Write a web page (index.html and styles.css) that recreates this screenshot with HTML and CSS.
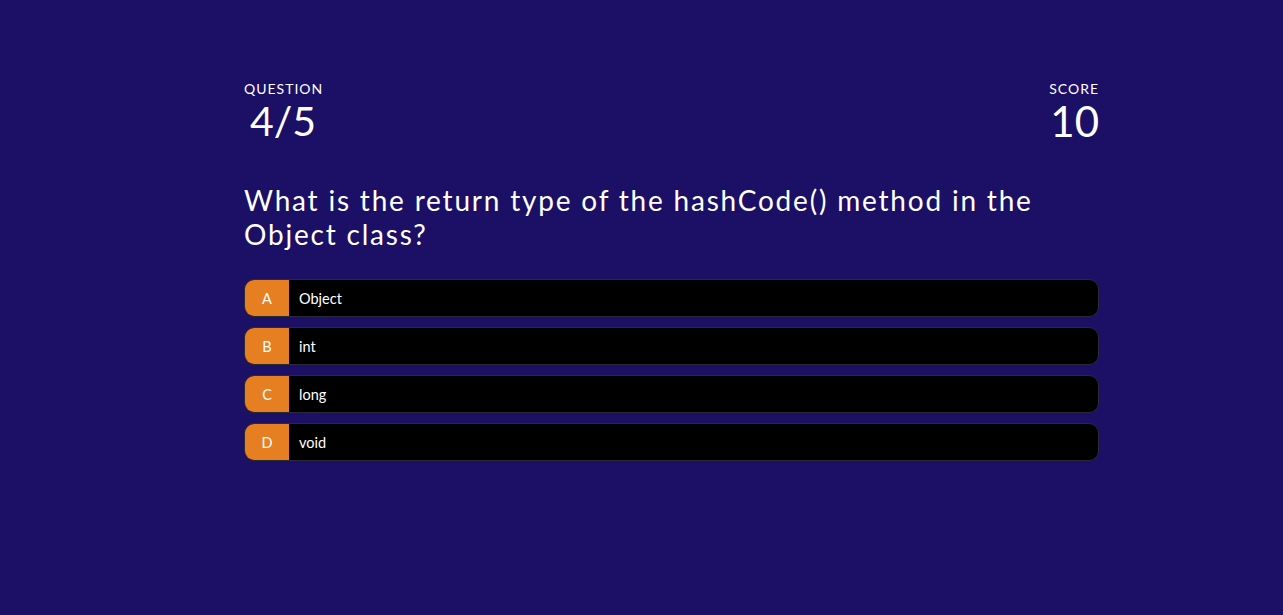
FILE: index.html
```html
<!DOCTYPE html>
<html>
<head>
<meta charset="utf-8">
<link rel="stylesheet" href="styles.css">
</head>
<body>
<div class="quiz">
  <div class="header">
    <div class="stat">
      <div class="label">QUESTION</div>
      <div class="value indent">4/5</div>
    </div>
    <div class="stat right">
      <div class="label">SCORE</div>
      <div class="value">10</div>
    </div>
  </div>
  <h1 class="question">What is the return type of the hashCode() method in the Object class?</h1>
  <div class="answers">
    <div class="answer"><span class="letter">A</span><span class="text">Object</span></div>
    <div class="answer"><span class="letter">B</span><span class="text">int</span></div>
    <div class="answer"><span class="letter">C</span><span class="text">long</span></div>
    <div class="answer"><span class="letter">D</span><span class="text">void</span></div>
  </div>
</div>
</body>
</html>
```
FILE: styles.css
```css
html, body {
  margin: 0;
  padding: 0;
}
body {
  background: #1c0f66;
  font-family: Lato, "Open Sans", sans-serif;
  color: #fff;
  height: 615px;
}
.quiz {
  width: 855px;
  margin: 0 auto;
  padding: 80px 0 0 60px;
}
.header {
  display: flex;
  justify-content: space-between;
}
.stat.right {
  text-align: right;
}
.label {
  font-size: 14px;
  letter-spacing: 1px;
  line-height: 17px;
}
.value {
  font-size: 42px;
  line-height: 48px;
}
.value.indent {
  padding-left: 6px;
  font-size: 41px;
}
.question {
  font-size: 28px;
  font-weight: 400;
  letter-spacing: 1.8px;
  line-height: 34px;
  margin: 38px 0 28px;
}
.answers {
  display: flex;
  flex-direction: column;
  gap: 10px;
}
.answer {
  display: flex;
  height: 36px;
  background: #000;
  border: 1px solid #2a2a3a;
  border-radius: 10px;
  overflow: hidden;
  font-size: 14.5px;
  align-items: stretch;
}
.letter {
  width: 44px;
  background: #e67e22;
  display: flex;
  align-items: center;
  justify-content: center;
}
.text {
  display: flex;
  align-items: center;
  padding-left: 10px;
}
```
